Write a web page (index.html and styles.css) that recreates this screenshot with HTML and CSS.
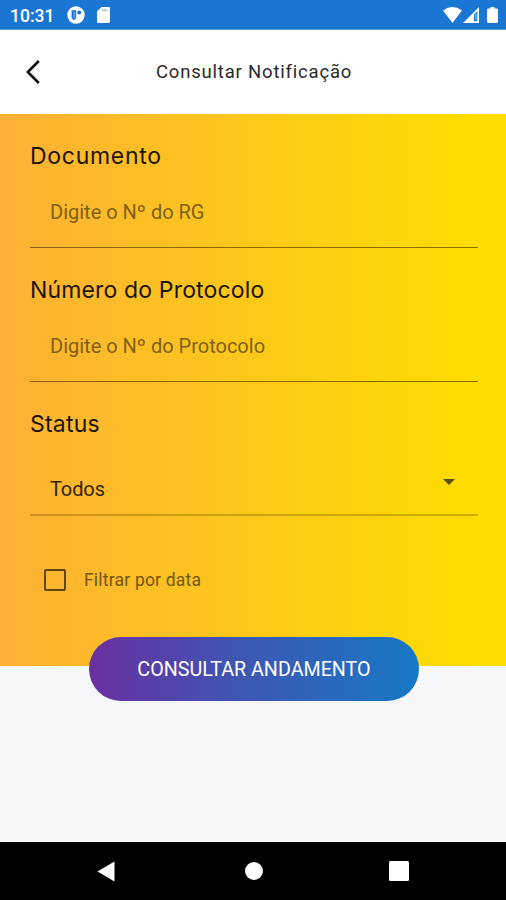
FILE: index.html
```
<!DOCTYPE html>
<html lang="pt-BR">
<head>
    <meta charset="utf-8">
    <title>Consultar Notificação</title>
    <link rel="stylesheet" href="styles.css">
</head>
<body>
    <div class="status-bar">
        <span class="clock">10:31</span>
        <svg class="icon-app" width="18" height="18" viewBox="0 0 18 18">
            <circle cx="9" cy="9" r="8.7" fill="#fff"/>
            <path d="M4.6 4.2h4.6v7.4a3 3 0 0 1-2.4 2.6Q4.6 13 4.6 11z" fill="#1976d2"/>
            <path d="M6.6 5.4h1.3v7.2H6.6z" fill="#6fa9e4"/>
            <circle cx="12.2" cy="6.6" r="2" fill="#1976d2"/>
        </svg>
        <svg class="icon-card" width="13" height="16" viewBox="0 0 13 16">
            <path d="M4.6 0H11.6Q13 0 13 1.4V14.6Q13 16 11.6 16H1.4Q0 16 0 14.6V4.6z" fill="#fff"/>
            <path d="M5 3.2h5.5" stroke="#8fbdec" stroke-width="1.4"/>
        </svg>
        <div class="status-right">
            <svg class="icon-wifi" width="19" height="16" viewBox="0 0 19 16">
                <path d="M0 3.4Q9.5-3.4 19 3.4L9.5 16z" fill="#fff"/>
            </svg>
            <svg class="icon-signal" width="16" height="16" viewBox="0 0 16 16">
                <path d="M16 0V16H0z" fill="#fff"/>
                <path d="M11 7.2L14.3 4v10.3H11z" fill="#1976d2"/>
                <path d="M12.8 6v7" stroke="#a9cdf0" stroke-width="1"/>
            </svg>
            <svg class="icon-battery" width="11" height="16" viewBox="0 0 11 16">
                <path d="M3.5 0h4v1.5H9.6Q11 1.5 11 2.9V14.6Q11 16 9.6 16H1.4Q0 16 0 14.6V2.9Q0 1.5 1.4 1.5H3.5z" fill="#fff"/>
            </svg>
        </div>
    </div>

    <div class="navbar">
        <svg class="back" width="14" height="24" viewBox="0 0 14 24">
            <path d="M12.8 1L1.8 12l11 11" fill="none" stroke="#111" stroke-width="2.6"/>
        </svg>
        <h1>Consultar Notificação</h1>
    </div>

    <form class="form-container">
        <div class="field">
            <label class="label-documento" for="documento">Documento</label>
            <input type="text" id="documento" placeholder="Digite o Nº do RG">
        </div>
        <div class="field">
            <label class="label-protocolo" for="protocolo">Número do Protocolo</label>
            <input type="text" id="protocolo" placeholder="Digite o Nº do Protocolo">
        </div>
        <div class="field">
            <label class="label-status">Status</label>
            <div class="select">
                <span>Todos</span>
                <svg width="12" height="6" viewBox="0 0 12 6"><path d="M0 0h12L6 6z" fill="#5c4f0c"/></svg>
            </div>
        </div>
        <div class="filter">
            <span class="checkbox"></span>
            <span class="filter-text">Filtrar por data</span>
        </div>
        <button type="button" class="submit">CONSULTAR ANDAMENTO</button>
    </form>

    <div class="android-nav">
        <svg width="18" height="21" viewBox="0 0 18 21"><path d="M17.5 .5v20L.5 10.5z" fill="#fff"/></svg>
        <svg class="home" width="18" height="18" viewBox="0 0 18 18"><circle cx="9" cy="9" r="9" fill="#fff"/></svg>
        <svg width="20" height="20" viewBox="0 0 20 20"><rect width="20" height="20" rx="1.5" fill="#fff"/></svg>
    </div>
</body>
</html>
```

FILE: styles.css
```
* {
    box-sizing: border-box;
}

body {
    margin: 0;
    height: 900px;
    display: flex;
    flex-direction: column;
    overflow: hidden;
    font-family: Roboto, sans-serif;
    background-color: #f5f7f9;
}

svg {
    display: block;
}

.status-bar {
    height: 30px;
    display: flex;
    align-items: center;
    padding: 1px 8px 0 10px;
    background-color: #1976d2;
    border-bottom: 1px solid #5c9ee0;
    color: #fff;
}

.clock {
    width: 57px;
    font-size: 17.5px;
    font-weight: 500;
    line-height: 20px;
    padding-top: 2px;
}

.icon-card {
    margin-left: 12px;
}

.status-right {
    display: flex;
    margin-left: auto;
}

.icon-signal {
    margin-left: 1px;
}

.icon-battery {
    margin-left: 8px;
}

.navbar {
    height: 84px;
    display: flex;
    align-items: center;
    padding-left: 26px;
    background-color: #fff;
}

.navbar h1 {
    margin: 0 0 0 116px;
    font-size: 18.5px;
    font-weight: 400;
    letter-spacing: 0.8px;
    color: #2a2a2a;
}

.form-container {
    height: 552px;
    display: flex;
    flex-direction: column;
    padding: 28px 28px 0 30px;
    background: linear-gradient(to right, #fdb035, #fdc41f 40%, #fedd00 95%);
}

.field {
    height: 106px;
    margin-bottom: 28px;
}

.field label {
    display: block;
    height: 28px;
    line-height: 28px;
    font-family: Inter, sans-serif;
    font-size: 23px;
    font-weight: 400;
    color: #1c1503;
    white-space: nowrap;
}

.field .label-documento {
    letter-spacing: 0.7px;
}

.field .label-protocolo {
    letter-spacing: 0.15px;
}

.field .label-status {
    letter-spacing: 0.2px;
}

.field input,
.select {
    display: flex;
    width: 100%;
    height: 78px;
    border: none;
    background: transparent;
    font-family: Roboto, sans-serif;
    font-size: 20px;
}

.field input {
    padding: 7px 20px 0;
    border-bottom: 1px solid rgba(60, 40, 0, 0.6);
    outline: none;
}

.field input::placeholder {
    color: #7f6113;
    opacity: 1;
}

.select {
    justify-content: space-between;
    padding: 37px 23px 0 20px;
    border-bottom: 2px solid rgba(90, 70, 0, 0.3);
    line-height: 28px;
    letter-spacing: -0.1px;
    color: #2f2606;
}

.select svg {
    margin-top: 4px;
}

.filter {
    display: flex;
    align-items: center;
    height: 22px;
    margin: 25px 0 0 14px;
}

.checkbox {
    width: 22px;
    height: 22px;
    border: 2px solid #5f480e;
    border-radius: 2px;
}

.filter-text {
    margin-left: 18px;
    font-size: 17.5px;
    letter-spacing: 0.2px;
    color: #72570f;
}

.submit {
    flex-shrink: 0;
    width: 330px;
    height: 64px;
    margin: 46px 0 0 59px;
    padding: 0;
    border: none;
    border-radius: 32px;
    background: linear-gradient(to right, #6a2fa0, #3f56b3 45%, #1779c6);
    color: #fff;
    font-family: Roboto, sans-serif;
    font-size: 19.7px;
}

.android-nav {
    height: 58px;
    margin-top: auto;
    display: flex;
    align-items: center;
    justify-content: space-between;
    padding: 0 97px;
    background-color: #000;
}

.android-nav .home {
    margin-left: 3px;
}
```
